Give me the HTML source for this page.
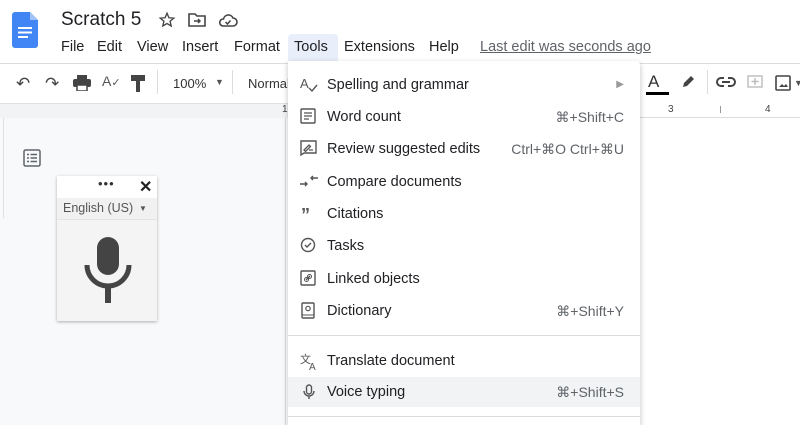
<!DOCTYPE html>
<html><head><style>
*{margin:0;padding:0;box-sizing:border-box}
body{width:800px;height:425px;overflow:hidden;background:#fff;font-family:"Liberation Sans",Arial,sans-serif;color:#202124;position:relative}
.abs{position:absolute}
.item{position:absolute;left:288px;width:352px;height:32px;font-size:14.5px;line-height:34px}
.item .t{position:absolute;left:39px}
.item .k{position:absolute;right:16px;color:#5f6368;font-size:14px}
.item svg{position:absolute;left:12px;top:8px}
.mb span{position:absolute;top:39px;font-size:14.5px}
</style></head><body>
<svg class="abs" style="left:12px;top:12px" width="26" height="36" viewBox="0 0 26 36"><path d="M3 0h15l8 8v25a3 3 0 0 1-3 3H3a3 3 0 0 1-3-3V3a3 3 0 0 1 3-3z" fill="#4285f4"/><path d="M18 0v8h8z" fill="#a1c2fa"/><rect x="6" y="15" width="14" height="2" fill="#fff"/><rect x="6" y="19.5" width="14" height="2" fill="#fff"/><rect x="6" y="24" width="10" height="2" fill="#fff"/></svg>
<div class="abs" style="left:61px;top:9px;font-size:19px">Scratch 5</div>
<svg class="abs" style="left:158px;top:11px" width="18" height="18" viewBox="0 0 24 24"><path d="M12 3l2.6 6 6.4.5-4.9 4.2 1.5 6.3L12 16.7 6.4 20l1.5-6.3L3 9.5 9.4 9z" fill="none" stroke="#444" stroke-width="1.8"/></svg>
<svg class="abs" style="left:188px;top:12px" width="18" height="16" viewBox="0 0 18 16"><path d="M1 2h6l2 2h8v10H1z" fill="none" stroke="#444" stroke-width="1.6"/><path d="M6 9h6M10 7l2 2-2 2" stroke="#444" stroke-width="1.5" fill="none"/></svg>
<svg class="abs" style="left:218px;top:12px" width="20" height="16" viewBox="0 0 20 16"><path d="M5 14h10a4 4 0 0 0 0-8 5 5 0 0 0-9.5 1A3.5 3.5 0 0 0 5 14z" fill="none" stroke="#444" stroke-width="1.6"/><path d="M7.5 10l2 2 3-3.5" stroke="#444" stroke-width="1.5" fill="none"/></svg>
<div class="mb">
<span style="left:61px">File</span><span style="left:97px">Edit</span><span style="left:137px">View</span><span style="left:182px">Insert</span><span style="left:234px">Format</span>
<div class="abs" style="left:288px;top:34px;width:50px;height:27px;background:#e8eefa;border-radius:4px 4px 0 0"></div>
<span style="left:294px">Tools</span><span style="left:344px">Extensions</span><span style="left:429px">Help</span>
<span style="left:480px;color:#5f6368;text-decoration:underline">Last edit was seconds ago</span>
</div>
<div class="abs" style="left:0;top:63px;width:800px;height:1px;background:#dadce0"></div>
<div class="abs" style="left:16px;top:74px;font-size:17px;color:#444">↶</div>
<div class="abs" style="left:45px;top:74px;font-size:17px;color:#444">↷</div>
<svg class="abs" style="left:73px;top:75px" width="18" height="16" viewBox="0 0 18 16"><rect x="4" y="0" width="10" height="4" fill="#444"/><rect x="0" y="4" width="18" height="8" rx="2" fill="#444"/><rect x="4" y="10" width="10" height="6" fill="#fff" stroke="#444" stroke-width="1.5"/></svg>
<div class="abs" style="left:102px;top:73px;font-size:14px;color:#555">A<span style="font-size:11px">✓</span></div>
<svg class="abs" style="left:131px;top:75px" width="14" height="17" viewBox="0 0 14 17"><rect x="0" y="0" width="14" height="6" fill="#444"/><rect x="5" y="6" width="4" height="11" fill="#444"/></svg>
<div class="abs" style="left:157px;top:70px;width:1px;height:24px;background:#dadce0"></div>
<div class="abs" style="left:173px;top:76px;font-size:13px;color:#333">100%</div>
<div class="abs" style="left:215px;top:77px;font-size:9px;color:#555">▼</div>
<div class="abs" style="left:232px;top:70px;width:1px;height:24px;background:#dadce0"></div>
<div class="abs" style="left:248px;top:76px;font-size:13px;color:#333">Normal</div>
<div class="abs" style="left:648px;top:72px;font-size:17px;color:#333">A</div>
<div class="abs" style="left:646px;top:92px;width:23px;height:3px;background:#000"></div>
<svg class="abs" style="left:680px;top:74px" width="16" height="16" viewBox="0 0 16 16"><path d="M3 13l1-4 7-7 3 3-7 7z" fill="#444"/></svg>
<div class="abs" style="left:707px;top:70px;width:1px;height:24px;background:#dadce0"></div>
<svg class="abs" style="left:716px;top:77px" width="20" height="10" viewBox="0 0 20 10"><path d="M8 1H5a4 4 0 0 0 0 8h3M12 1h3a4 4 0 0 1 0 8h-3M6 5h8" fill="none" stroke="#444" stroke-width="2"/></svg>
<svg class="abs" style="left:747px;top:75px" width="16" height="16" viewBox="0 0 16 16"><rect x="1" y="1" width="14" height="11" fill="none" stroke="#bbb" stroke-width="1.4"/><path d="M8 3v7M4.5 6.5h7" stroke="#bbb" stroke-width="1.4"/></svg>
<svg class="abs" style="left:775px;top:75px" width="16" height="16" viewBox="0 0 16 16"><rect x="1" y="1" width="14" height="14" rx="1" fill="none" stroke="#444" stroke-width="1.6"/><path d="M4 12l3-3 2 2 2-2 2 3z" fill="#444"/></svg>
<div class="abs" style="left:794px;top:78px;font-size:9px;color:#555">▼</div>
<div class="abs" style="left:0;top:103px;width:800px;height:15px;background:#f1f3f4;border-top:1px solid #e0e0e0"></div>
<div class="abs" style="left:640px;top:103px;width:160px;height:15px;background:#fff;border-bottom:1px solid #dadce0"></div>
<div class="abs" style="left:668px;top:104px;font-size:10px;color:#444">3</div>
<div class="abs" style="left:765px;top:104px;font-size:10px;color:#444">4</div>
<div class="abs" style="left:720px;top:106px;width:1px;height:7px;background:#999"></div>
<div class="abs" style="left:282px;top:104px;font-size:10px;color:#444">1</div>
<div class="abs" style="left:0;top:118px;width:800px;height:307px;background:#f8f9fa"></div>
<div class="abs" style="left:3px;top:118px;width:1px;height:100px;background:#e0e0e0"></div>
<div class="abs" style="left:285px;top:118px;width:1px;height:307px;background:#dadce0"></div>
<div class="abs" style="left:286px;top:118px;width:514px;height:307px;background:#fff"></div>
<svg class="abs" style="left:23px;top:149px" width="18" height="18" viewBox="0 0 18 18"><rect x="1" y="1" width="16" height="16" rx="1.5" fill="none" stroke="#5f6368" stroke-width="1.5"/><path d="M4 5.5h2M7.5 5.5h6.5M4 9h2M7.5 9h6.5M4 12.5h2M7.5 12.5h6.5" stroke="#5f6368" stroke-width="1.5"/></svg>
<div class="abs" style="left:57px;top:176px;width:100px;height:145px;background:#f4f4f4;box-shadow:0 1px 3px rgba(0,0,0,.3)">
<div style="height:22px;background:#fff;position:relative"><span style="position:absolute;left:41px;top:0px;font-size:13px;letter-spacing:1px;color:#333">•••</span><span style="position:absolute;left:82px;top:1px;font-size:16px;font-weight:bold;color:#222">✕</span></div>
<div style="height:22px;background:#f1f1f1;border-bottom:1px solid #e4e4e4;font-size:12.5px;color:#555;padding:3px 6px;position:relative">English (US)<span style="position:absolute;left:82px;top:6px;font-size:8px">▼</span></div>
<svg style="position:absolute;left:27px;top:61px" width="48" height="66" viewBox="0 0 48 66"><rect x="13" y="0" width="22" height="38" rx="11" fill="#444"/><path d="M3 28a21 21 0 0 0 42 0" fill="none" stroke="#444" stroke-width="5"/><rect x="21" y="48" width="6" height="18" fill="#444"/></svg>
</div>
<div class="abs" style="left:288px;top:61px;width:352px;height:364px;background:#fff;box-shadow:0 2px 6px rgba(0,0,0,.25);border-radius:0 4px 0 0"></div>
<div class="item" style="top:68px"><svg width="18" height="18" viewBox="0 0 18 18"><text x="0" y="12" font-size="13" fill="#555" font-family="Liberation Sans">A</text><path d="M9 12l3 3 5-6" fill="none" stroke="#555" stroke-width="1.4"/></svg><span class="t">Spelling and grammar</span><span class="k" style="font-size:10px;color:#999">▶</span></div>
<div class="item" style="top:100px"><svg width="16" height="16" viewBox="0 0 16 16"><rect x="1" y="1" width="14" height="14" rx="1" fill="none" stroke="#555" stroke-width="1.4"/><path d="M4 5h8M4 8h8M4 11h5" stroke="#555" stroke-width="1.3"/></svg><span class="t">Word count</span><span class="k">⌘+Shift+C</span></div>
<div class="item" style="top:132px"><svg width="17" height="17" viewBox="0 0 17 17"><path d="M1 15V1h15v12H4z" fill="none" stroke="#555" stroke-width="1.4"/><path d="M4 10l5-5 1.5 1.5-5 5zM9 10h4" stroke="#555" stroke-width="1.3" fill="none"/></svg><span class="t">Review suggested edits</span><span class="k">Ctrl+⌘O Ctrl+⌘U</span></div>
<div class="item" style="top:165px"><svg width="18" height="16" viewBox="0 0 18 16"><path d="M0 11h7M5 9l2 2-2 2M18 5h-7M13 3l-2 2 2 2" fill="none" stroke="#555" stroke-width="1.4"/></svg><span class="t">Compare documents</span></div>
<div class="item" style="top:197px"><svg width="16" height="16" viewBox="0 0 16 16"><text x="1" y="16" font-size="18" font-weight="bold" fill="#555" font-family="Liberation Sans">”</text></svg><span class="t">Citations</span></div>
<div class="item" style="top:229px"><svg width="16" height="16" viewBox="0 0 16 16"><circle cx="8" cy="8" r="6.5" fill="none" stroke="#555" stroke-width="1.4"/><path d="M5 8l2 2 4-4" fill="none" stroke="#555" stroke-width="1.4"/></svg><span class="t">Tasks</span></div>
<div class="item" style="top:262px"><svg width="16" height="16" viewBox="0 0 16 16"><rect x="1" y="1" width="14" height="14" rx="1" fill="none" stroke="#555" stroke-width="1.4"/><path d="M6 10l4-4" stroke="#555" stroke-width="1.3"/><circle cx="6.5" cy="9.5" r="2" fill="none" stroke="#555"/><circle cx="9.5" cy="6.5" r="2" fill="none" stroke="#555"/></svg><span class="t">Linked objects</span></div>
<div class="item" style="top:294px"><svg width="16" height="18" viewBox="0 0 16 18"><rect x="2" y="1" width="12" height="15" rx="1" fill="none" stroke="#555" stroke-width="1.4"/><circle cx="8" cy="6.5" r="2.2" fill="none" stroke="#555" stroke-width="1.2"/><path d="M2 13h12" stroke="#555"/></svg><span class="t">Dictionary</span><span class="k">⌘+Shift+Y</span></div>
<div class="abs" style="left:288px;top:335px;width:352px;height:1px;background:#dadce0"></div>
<div class="item" style="top:344px"><svg width="18" height="18" viewBox="0 0 18 18"><text x="0" y="11" font-size="11" fill="#555" font-family="Noto Sans CJK SC">文</text><text x="9" y="18" font-size="10" fill="#555" font-family="Liberation Sans">A</text></svg><span class="t">Translate document</span></div>
<div class="item" style="top:377px;height:30px;line-height:31px;background:#f1f3f4"><svg width="14" height="16" viewBox="0 0 14 16" style="top:7px;left:14px"><rect x="4.5" y="1" width="5" height="9" rx="2.5" fill="none" stroke="#555" stroke-width="1.4"/><path d="M2 7a5 5 0 0 0 10 0M7 12v3" fill="none" stroke="#555" stroke-width="1.4"/></svg><span class="t">Voice typing</span><span class="k">⌘+Shift+S</span></div>
<div class="abs" style="left:288px;top:416px;width:352px;height:1px;background:#dadce0"></div>
</body></html>
